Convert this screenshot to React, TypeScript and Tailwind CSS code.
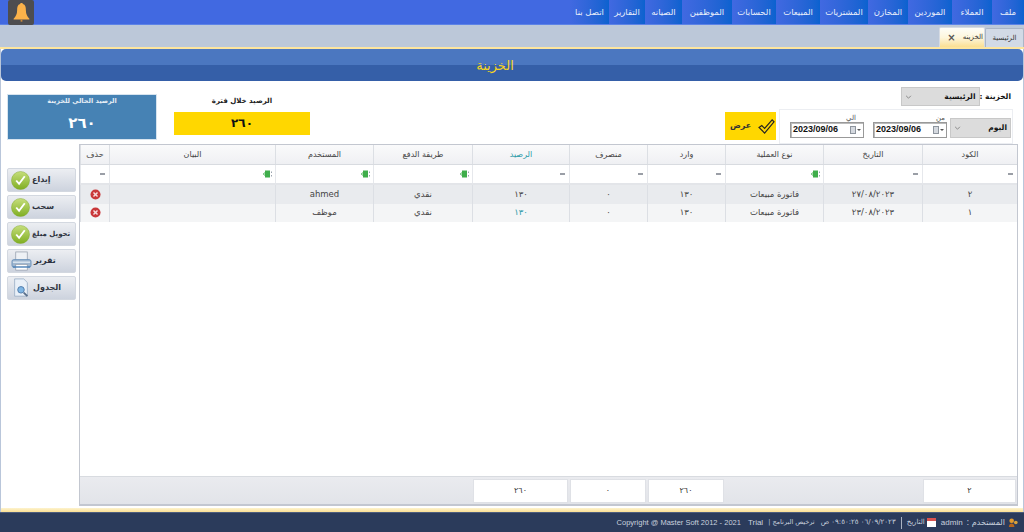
const menu = ["ملف", "العملاء", "الموردين", "المخازن", "المشتريات", "المبيعات", "الحسابات", "الموظفين", "الصيانه", "التقارير", "اتصل بنا"];
const menuWidths = ["w-[32px]", "w-[40px]", "w-[44px]", "w-[40px]", "w-[48px]", "w-[44px]", "w-[44px]", "w-[50px]", "w-[37px]", "w-[36px]", "w-[39px]"];

const columns = [
  { title: "الكود", w: "w-[95px]", filter: "=" },
  { title: "التاريخ", w: "w-[99px]", filter: "=" },
  { title: "نوع العملية", w: "w-[98px]", filter: "abc" },
  { title: "وارد", w: "w-[78px]", filter: "=" },
  { title: "منصرف", w: "w-[78px]", filter: "=" },
  { title: "الرصيد", w: "w-[97px]", filter: "=", teal: true },
  { title: "طريقة الدفع", w: "w-[99px]", filter: "abc" },
  { title: "المستخدم", w: "w-[98px]", filter: "abc" },
  { title: "البيان", w: "w-[166px]", filter: "abc" },
  { title: "حذف", w: "w-[29px]", filter: "=" },
];

const rows = [
  { cells: ["٢", "٢٧/٠٨/٢٠٢٣", "فاتورة مبيعات", "١٣٠", "٠", "١٣٠", "نقدي", "ahmed", ""], bg: "bg-[#e9ebee]" },
  { cells: ["١", "٢٣/٠٨/٢٠٢٣", "فاتورة مبيعات", "١٣٠", "٠", "١٣٠", "نقدي", "موظف", ""], bg: "bg-[#f4f5f6]", teal: true },
];

function Bell() {
  return (
    <svg viewBox="0 0 24 24" className="w-[21px] h-[21px]">
      <path d="M12 1c1 0 1.600.6 1.600 1.400C16.500 3.300 17 6 17 9.500c0 4.500 1.500 7 4 9.500v1H3v-1c2.500-2.500 4-5 4-9.500C7 6 7.500 3.300 10.400 2.400 10.400 1.600 11 1 12 1z" fill="#fbb24a" />
      <rect x="11" y="20" width="2" height="2.500" fill="#c9873a" />
    </svg>
  );
}

function GreenCheck() {
  return (
    <svg viewBox="0 0 20 20" className="w-[19px] h-[19px] shrink-0">
      <defs>
        <linearGradient id="greenball" x1="0" y1="0" x2="0" y2="1">
          <stop offset="0" stopColor="#c6de7c" />
          <stop offset="1" stopColor="#7fae22" />
        </linearGradient>
      </defs>
      <circle cx="10" cy="10" r="9.500" fill="url(#greenball)" stroke="#84a932" strokeWidth="0.500" />
      <path d="M5.500 10l3 3.500 6-8" fill="none" stroke="#fff" strokeWidth="2" />
    </svg>
  );
}

function Printer() {
  return (
    <svg viewBox="0 0 22 22" className="w-[21px] h-[21px] shrink-0">
      <rect x="5" y="1" width="12" height="9" fill="#eef1f5" stroke="#8b96a5" strokeWidth="0.700" />
      <rect x="1" y="9" width="20" height="8" rx="2" fill="#9fb6cf" stroke="#5f8ab5" strokeWidth="0.800" />
      <rect x="2" y="11" width="18" height="1.500" fill="#dbe6f1" />
      <rect x="5" y="14" width="12" height="6" fill="#fff" stroke="#8b96a5" strokeWidth="0.700" />
      <rect x="2" y="16" width="18" height="1.500" fill="#4f83b8" />
    </svg>
  );
}

function DocSearch() {
  return (
    <svg viewBox="0 0 22 22" className="w-[20px] h-[20px] shrink-0">
      <path d="M4 1h10l4 4v15H4z" fill="#e9f0f8" stroke="#8fa6bf" strokeWidth="0.800" />
      <circle cx="11" cy="13" r="3.600" fill="#7fb6e4" stroke="#4d78a8" strokeWidth="1" />
      <path d="M14 16l4 4" stroke="#5a6f8a" strokeWidth="2" />
    </svg>
  );
}

function Funnel() {
  return (
    <svg viewBox="0 0 10 8" className="w-[10px] h-[8px]">
      <rect x="0" y="3" width="1" height="2" fill="#86c98f" />
      <rect x="1" y="2" width="1" height="4" fill="#a9d9ae" />
      <rect x="2" y="0.500" width="5" height="7" fill="#3fae4b" />
      <rect x="8" y="1.500" width="1" height="1.500" fill="#9aa3ad" />
      <rect x="8" y="5" width="1" height="1.500" fill="#9aa3ad" />
    </svg>
  );
}

function RedX() {
  return (
    <svg viewBox="0 0 12 12" className="w-[11px] h-[11px]">
      <circle cx="6" cy="6" r="5.500" fill="#c9383a" />
      <path d="M3.800 3.800l4.400 4.400M8.200 3.800l-4.400 4.400" stroke="#f6dcdc" strokeWidth="1.600" />
    </svg>
  );
}

function Chevron() {
  return (
    <svg viewBox="0 0 8 5" className="w-[7px] h-[4px]">
      <path d="M1 1l3 3 3-3" fill="none" stroke="#777" strokeWidth="1" />
    </svg>
  );
}

function SideButton({ label, icon, small }: { label: string; icon: React.ReactNode; small?: boolean }) {
  return (
    <div className="w-[69px] h-[24px] shrink-0 rounded-[2px] border border-[#d3d8e0] bg-gradient-to-b from-[#eceef2] to-[#cdd3de] flex items-center gap-[2px] pl-[3px]">
      {icon}
      <span dir="rtl" className={`${small ? "text-[7px]" : "text-[8px]"} font-bold text-[#2e3340] whitespace-nowrap`}>{label}</span>
    </div>
  );
}

function DateBox() {
  return (
    <div className="w-[74px] h-[16px] bg-white border border-[#999] flex items-center justify-between px-[2px] shadow-[inset_1px_1px_0_#bbb]">
      <span className="text-[9px] font-bold text-[#111] font-['Liberation_Sans',sans-serif]">2023/09/06</span>
      <span className="flex items-center gap-[1px]">
        <span className="w-[6px] h-[8px] bg-[#d5d9df] border border-[#8e959e]" />
        <span className="w-0 h-0 border-x-[2px] border-x-transparent border-t-[2px] border-t-[#555]" />
      </span>
    </div>
  );
}

export default function App() {
  return (
    <div className="w-[1024px] h-[532px] flex flex-col overflow-hidden bg-white font-['DejaVu_Sans',sans-serif]">
      {/* top menu */}
      <div className="h-[25px] shrink-0 bg-[#4169e1] flex flex-row-reverse items-stretch border-b border-[#5d83e6]">
        {menu.map((m, i) => (
          <div key={m} className={`${menuWidths[i]} bg-gradient-to-r from-[#4169e1] to-[#0a62cf] flex items-center justify-center`}>
            <span dir="rtl" className="text-[8.500px] text-[#e8eefb] whitespace-nowrap">{m}</span>
          </div>
        ))}
        <div className="flex-1 flex items-center pl-[8px]">
          <div className="w-[26px] h-[25px] bg-[#4d4d50] rounded-[2px] flex items-center justify-center">
            <Bell />
          </div>
        </div>
      </div>

      {/* tab strip */}
      <div className="h-[22px] shrink-0 bg-[#bcc8d9] flex justify-end items-end">
        <div className="w-[46px] h-[20px] bg-gradient-to-b from-[#fdfdf8] via-[#fdf6dc] to-[#fbdf92] border border-[#d6dbe3] border-b-0 rounded-t-[2px] flex items-center justify-end gap-[7px] pr-[1px]">
          <span className="text-[10px] font-bold text-[#555] leading-none">×</span>
          <span dir="rtl" className="text-[7px] text-[#333]">الخزينه</span>
        </div>
        <div className="w-[39px] h-[19px] bg-[#d2dae6] border border-[#aab5c6] border-b-0 rounded-t-[2px] flex items-center justify-center">
          <span dir="rtl" className="text-[7px] text-[#333]">الرئيسية</span>
        </div>
      </div>

      <div className="h-[2px] shrink-0 bg-[#fde59e]" />

      {/* page */}
      <div className="flex-1 min-h-0 flex flex-col border-x border-[#b9c6da] bg-white">
        <div className="h-[32px] shrink-0 rounded-[5px] bg-[linear-gradient(#4b77c0_0,#4b77c0_50%,#355fa8_50%,#355fa8_100%)] flex items-center justify-center pr-[34px] pt-[1px]">
          <span dir="rtl" className="text-[13px] text-[#f6d31e]">الخزينة</span>
        </div>

        {/* filters */}
        <div className="h-[63px] shrink-0 flex pl-[6px] pr-[10px] pt-[6px] justify-between">
          <div className="flex gap-[17px] pt-[7px]">
            <div className="w-[150px] h-[46px] bg-[#4682b4] border border-[#d7e4ef] flex flex-col items-center pt-[2px] gap-[9px]">
              <span dir="rtl" className="text-[6.500px] font-bold text-[#e6eef6]">الرصيد الحالي للخزينة</span>
              <span className="text-[15px] font-bold text-white leading-none">٢٦٠</span>
            </div>
            <div className="w-[136px] flex flex-col items-center gap-[5px] pt-[2px]">
              <span dir="rtl" className="text-[7px] font-bold text-[#222]">الرصيد خلال فترة</span>
              <div className="w-[136px] h-[23px] bg-[#ffd700] flex items-center justify-center">
                <span className="text-[12px] font-bold text-[#111]">٢٦٠</span>
              </div>
            </div>
          </div>
          <div className="flex flex-col items-end gap-[3px]">
            <div className="flex items-center pr-[2px]">
              <div className="w-[79px] h-[19px] bg-[#dcdcdc] border border-[#c8c8c8] flex items-center justify-between px-[3px]">
                <Chevron />
                <span dir="rtl" className="text-[7.500px] font-bold text-[#111]">الرئيسية</span>
              </div>
              <span dir="rtl" className="text-[7.500px] font-bold text-[#111] whitespace-nowrap">الخزينة :</span>
            </div>
            <div className="flex items-start gap-[3px]">
              <div className="w-[51px] h-[28px] mt-[3px] bg-[#ffd700] flex items-center gap-[7px] pl-[5px]">
                <span dir="rtl" className="text-[8px] font-bold text-[#333]">عرض</span>
                <svg viewBox="0 0 18 16" className="w-[17px] h-[15px]">
                  <path d="M1 9l3-2 3 3 8-9 2 2L7 15z" fill="none" stroke="#222" strokeWidth="1.300" />
                </svg>
              </div>
              <div className="w-[234px] h-[35px] border border-[#eceef2] flex items-end pb-[5px] pl-[10px]">
                <div className="flex flex-col items-end">
                  <span dir="rtl" className="text-[7px] text-[#555] leading-[8px] pr-[8px]">الي</span>
                  <DateBox />
                </div>
                <div className="flex flex-col items-end ml-[9px]">
                  <span dir="rtl" className="text-[7px] text-[#555] leading-[8px] pr-[2px]">من</span>
                  <DateBox />
                </div>
                <div className="w-[61px] h-[20px] ml-[3px] bg-[#dcdcdc] border border-[#c8c8c8] flex items-center justify-between px-[3px]">
                  <Chevron />
                  <span dir="rtl" className="text-[7.500px] font-bold text-[#111]">اليوم</span>
                </div>
              </div>
            </div>
          </div>
        </div>

        {/* body */}
        <div className="flex-1 min-h-0 flex pl-[6px] pr-[5px]">
          <div className="w-[72px] shrink-0 flex flex-col gap-[3px] pt-[24px]">
            <SideButton label="إيداع" icon={<GreenCheck />} />
            <SideButton label="سحب" icon={<GreenCheck />} />
            <SideButton label="تحويل مبلغ" icon={<GreenCheck />} small />
            <SideButton label="تقرير" icon={<Printer />} />
            <SideButton label="الجدول" icon={<DocSearch />} />
          </div>

          <div className="flex-1 min-w-0 flex flex-col border border-[#c3c7d0] border-b-2">
            <div className="h-[20px] shrink-0 flex flex-row-reverse bg-gradient-to-b from-[#fafafb] to-[#eff0f3] border-b border-[#d8dbe0]">
              {columns.map((c) => (
                <div key={c.title} className={`${c.w} border-l border-[#dcdfe4] flex items-center justify-center`}>
                  <span dir="rtl" className={`text-[8px] ${c.teal ? "text-[#2b9aa8]" : "text-[#444]"}`}>{c.title}</span>
                </div>
              ))}
            </div>
            <div className="h-[20px] shrink-0 flex flex-row-reverse border-b-[2px] border-[#e3e5e9]">
              {columns.map((c) => (
                <div key={c.title} className={`${c.w} border-l border-[#e6e8ec] flex items-center justify-end ${c.filter === "=" ? "pr-[4px]" : "pr-[2px]"}`}>
                  {c.filter === "=" ? <span className="w-[5px] h-[2px] bg-[#9a9ea6]" /> : <Funnel />}
                </div>
              ))}
            </div>
            {rows.map((r) => (
              <div key={r.cells[0]} className={`h-[18.500px] shrink-0 flex flex-row-reverse ${r.bg}`}>
                {columns.map((c, i) => (
                  <div key={c.title} className={`${c.w} border-l border-[#dcdfe4] flex items-center justify-center`}>
                    {i === 9 ? <RedX /> : (
                      <span dir="rtl" className={`text-[8.500px] ${r.teal && i === 5 ? "text-[#2b9aa8]" : "text-[#444]"}`}>{r.cells[i]}</span>
                    )}
                  </div>
                ))}
              </div>
            ))}
            <div className="flex-1 min-h-0" />
            <div className="h-[28px] shrink-0 border-t border-[#d8dbe0] bg-gradient-to-b from-[#eaebef] to-[#e2e4e9] flex flex-row-reverse items-center">
              {columns.map((c, i) => {
                const v = i === 0 ? "٢" : i === 3 ? "٢٦٠" : i === 4 ? "٠" : i === 5 ? "٢٦٠" : null;
                return (
                  <div key={c.title} className={`${c.w} h-[24px] flex justify-center px-[1px]`}>
                    {v && (
                      <div className="w-full h-full bg-white border border-[#dfe1e6] flex items-center justify-center">
                        <span className="text-[8px] text-[#333]">{v}</span>
                      </div>
                    )}
                  </div>
                );
              })}
            </div>
          </div>
        </div>
        <div className="h-[2px] shrink-0" />
        <div className="h-[4px] shrink-0 bg-gradient-to-b from-[#fdf3cf] to-[#fbdf92]" />
      </div>

      {/* footer */}
      <div className="h-[20px] shrink-0 bg-[#2b3b5b] flex flex-row-reverse items-center pr-[5px] border-t border-[#4d5d7c]">
        <svg viewBox="0 0 12 12" className="w-[11px] h-[11px]">
          <circle cx="4" cy="4" r="2.500" fill="#e39a2b" />
          <path d="M1 11c0-3 1.500-4 3-4s3 1 3 4z" fill="#b5651d" />
          <circle cx="8.500" cy="6" r="2" fill="#d9a13a" />
        </svg>
        <span dir="rtl" className="mr-[3px] text-[8px] text-[#c9d1de]">المستخدم :</span>
        <span className="mr-[4px] text-[8px] text-[#c9d1de] font-['Liberation_Sans',sans-serif]">admin</span>
        <span className="mr-[5px] w-[9px] h-[9px] bg-white border-t-[3px] border-[#d9534f]" />
        <span dir="rtl" className="mr-[2px] text-[7px] text-[#c9d1de]">التاريخ</span>
        <span className="mr-[5px] w-px h-[12px] bg-[#aab3c2]" />
        <span dir="rtl" className="mr-[5px] text-[7px] text-[#c9d1de]">٠٦/٠٩/٢٠٢٣ ٠٩:٥٠:٢٥ ص</span>
        <span dir="rtl" className="mr-[6px] text-[6.500px] text-[#c9d1de]">ترخيص البرنامج |</span>
        <span className="mr-[5px] text-[8px] text-[#c9d1de] font-['Liberation_Sans',sans-serif]">Trial</span>
        <span className="mr-[7px] text-[7.500px] text-[#c9d1de] font-['Liberation_Sans',sans-serif]">Copyright @ Master Soft 2012 - 2021</span>
      </div>
    </div>
  );
}
